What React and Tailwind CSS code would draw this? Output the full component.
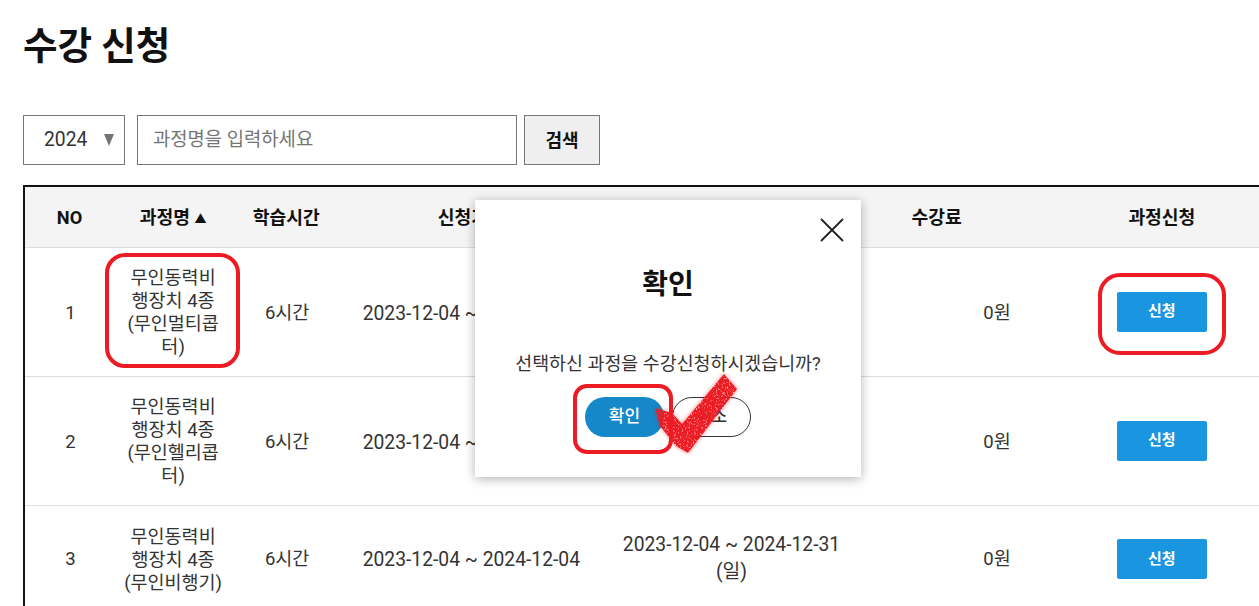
import React from 'react';

const rows = [
  { no: 1, name: '무인동력비 행장치 4종 (무인멀티콥터)', namePad: 'pb-[17px] pt-[19px]', btnPad: '' },
  { no: 2, name: '무인동력비 행장치 4종 (무인헬리콥터)', namePad: 'pb-[17px] pt-[19px]', btnPad: '' },
  { no: 3, name: '무인동력비 행장치 4종 (무인비행기)', namePad: 'pb-[16px] pt-[20px]', btnPad: 'mt-[2px]' },
];

const Th = ({ children }) => (
  <th className="h-[61px] p-0 pt-[1px] text-center text-[18.2px] font-bold text-[#111] border-b border-[#ddd]">
    {children}
  </th>
);

const RedBox = ({ className }) => (
  <div className={`absolute border-[4px] border-[#ed1c24] ${className}`} />
);

const CHECK_POINTS = '655,408 672,413 682,424 724,374 737,389 688,453 676,446 660,426';

const CheckMark = () => (
  <svg className="absolute left-[645px] top-[364px]" width="104" height="100" viewBox="645 364 104 100">
    <defs>
      <filter id="halo" x="-20%" y="-20%" width="140%" height="140%">
        <feGaussianBlur stdDeviation="2.2" />
      </filter>
      <filter id="speckle" x="-10%" y="-10%" width="120%" height="120%">
        <feTurbulence type="fractalNoise" baseFrequency="0.55" numOctaves="2" seed="7" result="noise" />
        <feColorMatrix in="noise" type="matrix" values="0 0 0 0 0  0 0 0 0 0  0 0 0 0 0  0 0 0 -6 4.3" result="mask" />
        <feComposite in="SourceGraphic" in2="mask" operator="in" />
      </filter>
    </defs>
    <polygon points={CHECK_POINTS} fill="#ed1c24" opacity="0.55" filter="url(#halo)" />
    <polygon points={CHECK_POINTS} fill="#ed1c24" filter="url(#speckle)" />
  </svg>
);

export default function App() {
  return (
    <div
      className="relative h-[606px] w-[1259px] overflow-hidden bg-white text-[#333]"
      style={{ fontFamily: 'Roboto, "Noto Sans CJK KR", sans-serif' }}
    >
      <div className="pl-[23px] pt-[20px]">
        <h1 className="h-[52px] text-[37.5px] font-bold leading-[52px] text-[#111]">수강 신청</h1>

        <div className="mt-[43px] flex h-[50px] items-stretch">
          <div className="flex w-[102px] items-center border border-[#767676] pl-[20px] text-[19.3px]">
            <span>2024</span>
            <svg className="ml-[17px]" width="10" height="12" viewBox="0 0 10 12">
              <polygon points="0,0 10,0 5,12" fill="#757575" />
            </svg>
          </div>
          <div className="ml-[12px] flex w-[380px] items-center border border-[#767676] pl-[15px] text-[18.8px] text-[#757575]">
            과정명을 입력하세요
          </div>
          <button className="ml-[7px] w-[76px] border border-[#767676] bg-[#efefef] text-[18px] font-bold text-[#111]">
            검색
          </button>
        </div>

        <table className="mt-[20px] w-[1288px] table-fixed border-collapse border-l-2 border-t-2 border-[#111]">
          <colgroup>
            <col className="w-[90px]" />
            <col className="w-[118px]" />
            <col className="w-[108px]" />
            <col className="w-[262px]" />
            <col className="w-[258px]" />
            <col className="w-[152px]" />
            <col className="w-[298px]" />
          </colgroup>
          <thead>
            <tr className="bg-[#f4f4f4]">
              <Th>NO</Th>
              <Th>
                과정명 <span className="text-[12px]">▲</span>
              </Th>
              <Th>학습시간</Th>
              <Th>신청기간</Th>
              <Th>수강기간</Th>
              <Th>수강료</Th>
              <Th>과정신청</Th>
            </tr>
          </thead>
          <tbody>
            {rows.map((row) => (
              <tr key={row.no} className="border-b border-[#ddd] text-[18.5px] leading-[23px]">
                <td className="p-0 pl-[2px] pt-[3px] text-center">{row.no}</td>
                <td className={`px-[7px] text-center ${row.namePad}`}>{row.name}</td>
                <td className="p-0 pl-[2px] pt-[3px] text-center">6시간</td>
                <td className="p-0 pt-[3px] text-center text-[19.3px]">2023-12-04 ~ 2024-12-04</td>
                <td className="p-0 text-center text-[19.3px] leading-[27px]">
                  2023-12-04 ~ 2024-12-31
                  <br />
                  (일)
                </td>
                <td className="p-0 pr-[2px] pt-[3px] text-right">0원</td>
                <td className="p-0">
                  <button className={`ml-[104px] flex h-[40px] w-[90px] items-center justify-center rounded-[2px] bg-[#1a96e0] text-[15px] font-bold text-white ${row.btnPad}`}>
                    신청
                  </button>
                </td>
              </tr>
            ))}
          </tbody>
        </table>
      </div>

      {/* confirm modal */}
      <div className="absolute left-[475px] top-[200px] flex h-[277px] w-[386px] flex-col items-center bg-white shadow-[0_2px_10px_rgba(0,0,0,0.3)]">
        <svg className="absolute right-[17px] top-[18px]" width="24" height="24" viewBox="0 0 24 24">
          <path d="M1 1l22 22M23 1L1 23" stroke="#222" strokeWidth="1.8" fill="none" />
        </svg>
        <h2 className="mt-[65px] text-[28px] font-bold leading-[40px] text-[#111]">확인</h2>
        <p className="mt-[46px] text-[18.4px] leading-[26px]">선택하신 과정을 수강신청하시겠습니까?</p>
        <div className="mt-[20px] flex gap-[8px]">
          <button className="h-[40px] w-[79px] rounded-full bg-[#1488c8] text-[17px] font-medium text-white">확인</button>
          <button className="h-[40px] w-[79px] rounded-full border border-[#333] bg-white text-[17px] font-medium">취소</button>
        </div>
      </div>

      {/* red annotations */}
      <RedBox className="left-[105px] top-[253px] h-[115px] w-[135px] rounded-[20px]" />
      <RedBox className="left-[1098px] top-[273px] h-[82px] w-[128px] rounded-[22px]" />
      <RedBox className="left-[573px] top-[384px] h-[70px] w-[100px] rounded-[14px]" />
      <CheckMark />
    </div>
  );
}
